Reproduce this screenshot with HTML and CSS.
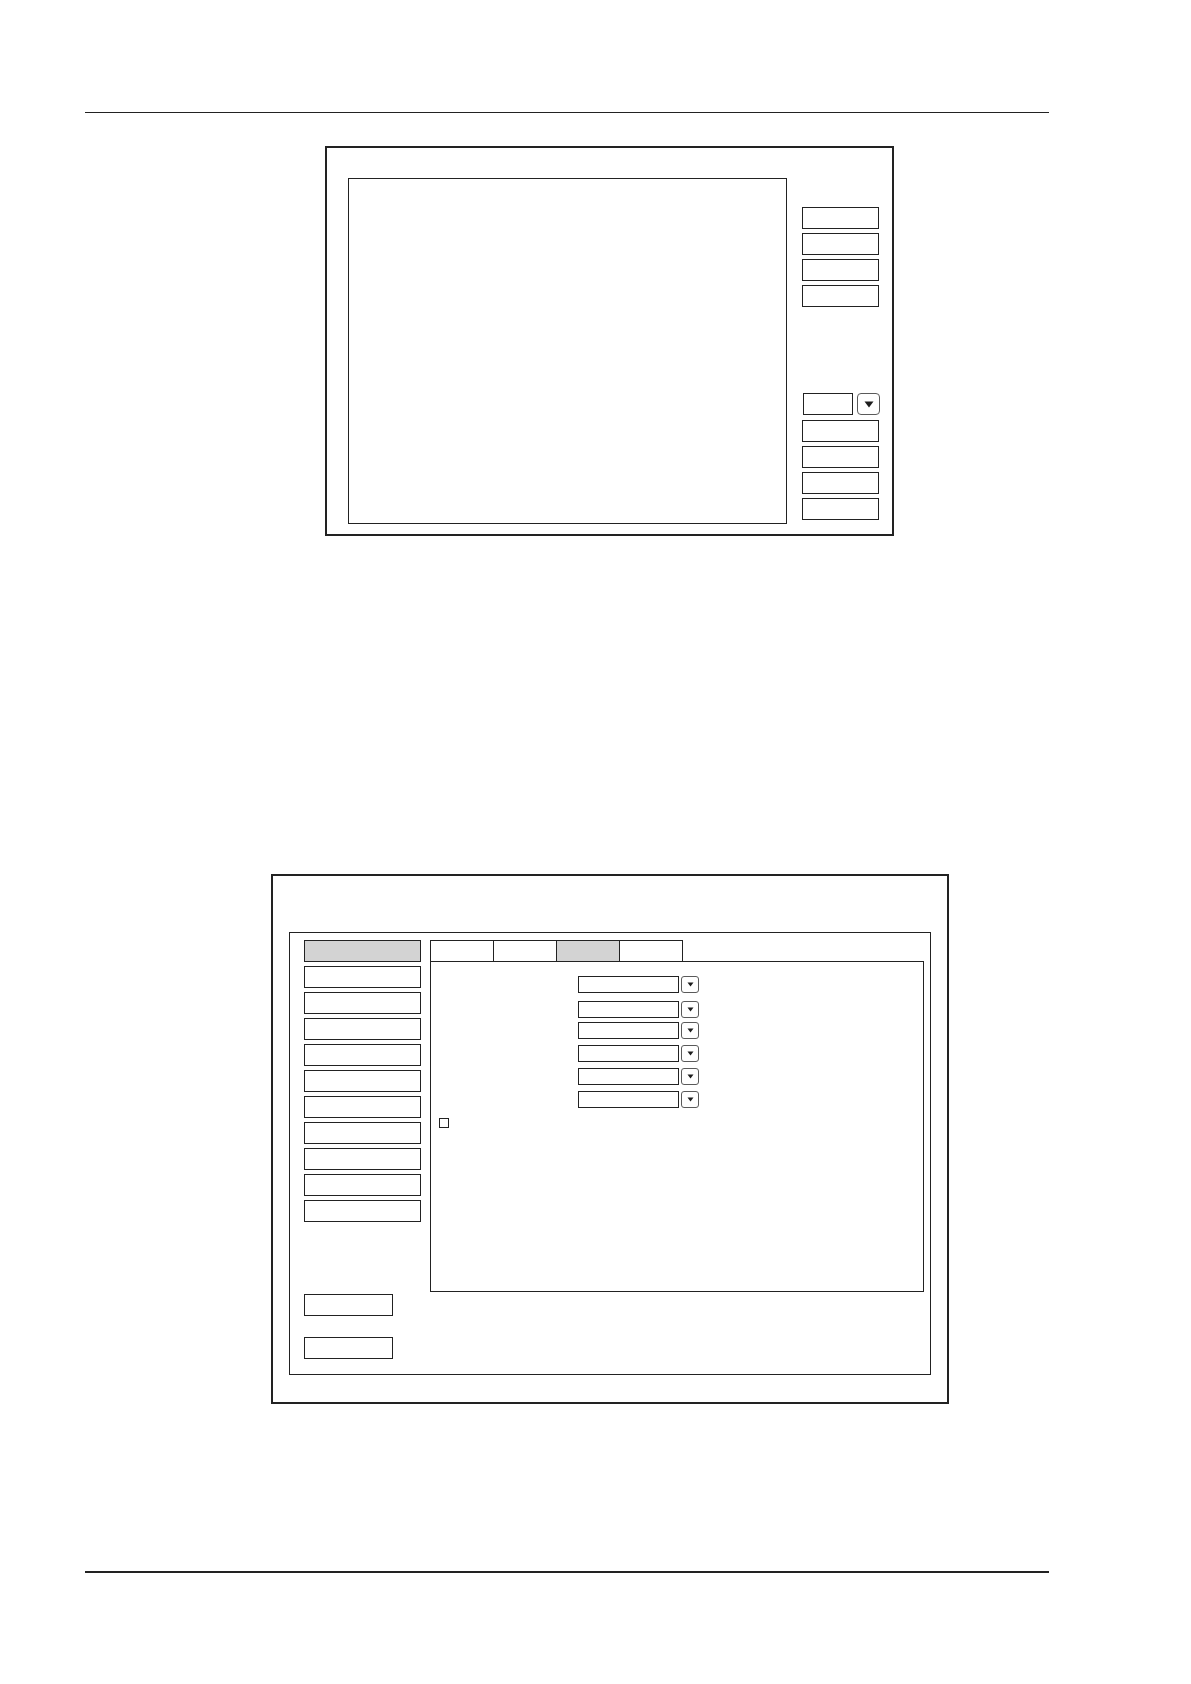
FILE: index.html
```html
<!DOCTYPE html>
<html lang="en">
<head>
<meta charset="utf-8">
<title>Dialog layouts</title>
<link rel="stylesheet" href="styles.css">
</head>
<body>
<div class="page">
  <div class="rule-top"></div>

  <div class="win1">
    <div class="view-panel"></div>
    <div class="side">
      <div class="group">
        <div class="btn"></div>
        <div class="btn"></div>
        <div class="btn"></div>
        <div class="btn"></div>
      </div>
      <div class="group group-low">
        <div class="combo">
          <div class="combo-field"></div>
          <div class="combo-arrow">
            <svg width="10" height="7" viewBox="0 0 10 7"><path d="M0.5 0.5 H9.5 L5 6.5 Z" fill="#1d1d1d"/></svg>
          </div>
        </div>
        <div class="btn"></div>
        <div class="btn"></div>
        <div class="btn"></div>
        <div class="btn"></div>
      </div>
    </div>
  </div>

  <div class="win2">
    <div class="frame">
      <div class="left-col">
        <div class="list">
          <div class="item selected"></div>
          <div class="item"></div>
          <div class="item"></div>
          <div class="item"></div>
          <div class="item"></div>
          <div class="item"></div>
          <div class="item"></div>
          <div class="item"></div>
          <div class="item"></div>
          <div class="item"></div>
          <div class="item"></div>
        </div>
        <div class="small-btn first"></div>
        <div class="small-btn second"></div>
      </div>
      <div class="right-col">
        <div class="tabs">
          <div class="tab"></div>
          <div class="tab"></div>
          <div class="tab active"></div>
          <div class="tab"></div>
        </div>
        <div class="tab-panel">
          <div class="row"><div class="field"></div><div class="dd"><svg width="7" height="5" viewBox="0 0 7 5"><path d="M0.5 0.5 H6.5 L3.5 4.5 Z" fill="#1d1d1d"/></svg></div></div>
          <div class="row row-spaced"><div class="field"></div><div class="dd"><svg width="7" height="5" viewBox="0 0 7 5"><path d="M0.5 0.5 H6.5 L3.5 4.5 Z" fill="#1d1d1d"/></svg></div></div>
          <div class="row row-tight"><div class="field"></div><div class="dd"><svg width="7" height="5" viewBox="0 0 7 5"><path d="M0.5 0.5 H6.5 L3.5 4.5 Z" fill="#1d1d1d"/></svg></div></div>
          <div class="row"><div class="field"></div><div class="dd"><svg width="7" height="5" viewBox="0 0 7 5"><path d="M0.5 0.5 H6.5 L3.5 4.5 Z" fill="#1d1d1d"/></svg></div></div>
          <div class="row"><div class="field"></div><div class="dd"><svg width="7" height="5" viewBox="0 0 7 5"><path d="M0.5 0.5 H6.5 L3.5 4.5 Z" fill="#1d1d1d"/></svg></div></div>
          <div class="row"><div class="field"></div><div class="dd"><svg width="7" height="5" viewBox="0 0 7 5"><path d="M0.5 0.5 H6.5 L3.5 4.5 Z" fill="#1d1d1d"/></svg></div></div>
          <div class="checkbox"></div>
        </div>
      </div>
    </div>
  </div>

  <div class="rule-bottom"></div>
</div>
</body>
</html>
```

FILE: styles.css
```css
* { box-sizing: border-box; }

html, body {
  margin: 0;
  padding: 0;
  background: #ffffff;
  font-family: "Liberation Sans", Arial, sans-serif;
}

.page {
  width: 1191px;
  height: 1684px;
  padding-top: 112px;
  display: flex;
  flex-direction: column;
  align-items: flex-start;
}

.rule-top {
  margin-left: 85px;
  width: 964px;
  height: 1px;
  background: #222222;
}

.rule-bottom {
  margin-left: 85px;
  margin-top: 167px;
  width: 964px;
  height: 2px;
  background: #222222;
}

/* ---------- first window ---------- */
.win1 {
  margin-top: 33px;
  margin-left: 325px;
  width: 569px;
  height: 390px;
  border: 2px solid #222222;
  padding: 30px 0 0 21px;
  display: flex;
  align-items: flex-start;
}

.view-panel {
  width: 439px;
  height: 346px;
  border: 1px solid #222222;
  flex: none;
}

.side {
  margin-left: 15px;
  margin-top: 29px;
  width: 78px;
  display: flex;
  flex-direction: column;
}

.group {
  display: flex;
  flex-direction: column;
  gap: 4px;
}

.group-low {
  margin-top: 86px;
}

.btn {
  width: 77px;
  height: 22px;
  border: 1px solid #222222;
}

.combo {
  display: flex;
  gap: 4px;
  margin-left: 1px;
  margin-bottom: 1px;
}

.combo-field {
  width: 50px;
  height: 22px;
  border: 1px solid #222222;
}

.combo-arrow {
  width: 23px;
  height: 22px;
  border: 1.5px solid #5a5a5a;
  border-radius: 4px;
  display: flex;
  align-items: center;
  justify-content: center;
}

/* ---------- second window ---------- */
.win2 {
  margin-top: 338px;
  margin-left: 271px;
  width: 678px;
  height: 530px;
  border: 2px solid #222222;
  padding: 56px 16px 27px 16px;
  display: flex;
}

.frame {
  flex: 1;
  border: 1px solid #222222;
  padding: 7px 6px 0 14px;
  display: flex;
  gap: 9px;
  align-items: flex-start;
}

.left-col {
  width: 117px;
  display: flex;
  flex-direction: column;
}

.list {
  display: flex;
  flex-direction: column;
  gap: 4px;
}

.item {
  width: 117px;
  height: 22px;
  border: 1px solid #222222;
}

.item.selected {
  background: #d3d3d3;
}

.small-btn {
  width: 89px;
  height: 22px;
  border: 1px solid #222222;
}

.small-btn.first { margin-top: 72px; }
.small-btn.second { margin-top: 21px; }

.right-col {
  width: 494px;
  display: flex;
  flex-direction: column;
}

.tabs {
  display: flex;
  height: 22px;
}

.tab {
  width: 64px;
  height: 22px;
  border: 1px solid #222222;
  margin-right: -1px;
}

.tab.active {
  background: #d3d3d3;
}

.tab-panel {
  margin-top: -1px;
  width: 494px;
  height: 331px;
  border: 1px solid #222222;
  padding-top: 14px;
  display: flex;
  flex-direction: column;
  gap: 6px;
}

.row {
  margin-left: 147px;
  display: flex;
  gap: 2px;
}

.row.row-spaced { margin-top: 2px; }
.row.row-tight { margin-top: -2px; }

.field {
  width: 101px;
  height: 17px;
  border: 1px solid #222222;
}

.dd {
  width: 18px;
  height: 17px;
  border: 1.3px solid #5a5a5a;
  border-radius: 3px;
  display: flex;
  align-items: center;
  justify-content: center;
}

.checkbox {
  margin-top: 4px;
  margin-left: 8px;
  width: 10px;
  height: 10px;
  border: 1px solid #222222;
}
```
